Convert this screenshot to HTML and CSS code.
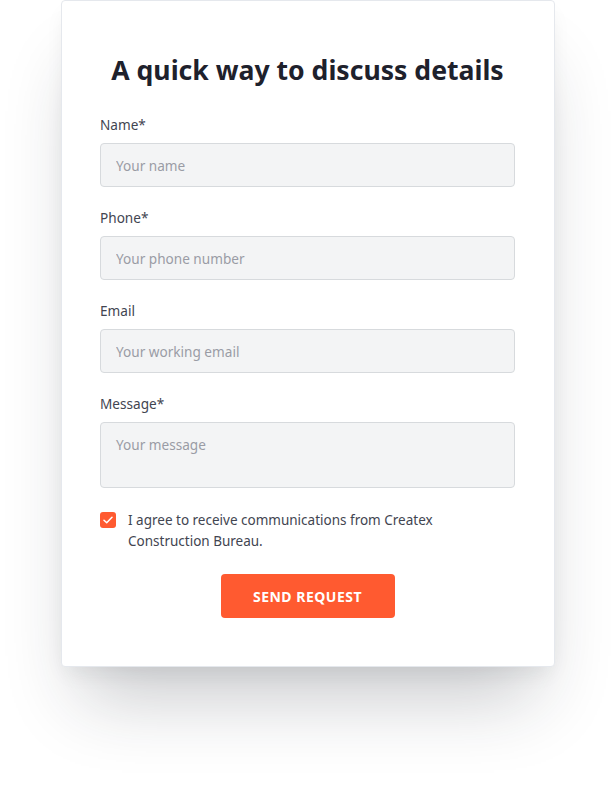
FILE: index.html
```html
<!DOCTYPE html>
<html lang="en">
<head>
<meta charset="utf-8">
<title>Contact form</title>
<link rel="stylesheet" href="styles.css">
</head>
<body>
<div class="page">
  <form class="card">
    <h1 class="title">A quick way to discuss details</h1>
    <div class="field">
      <label class="label" for="name">Name*</label>
      <input class="input" id="name" type="text" placeholder="Your name">
    </div>
    <div class="field">
      <label class="label" for="phone">Phone*</label>
      <input class="input" id="phone" type="text" placeholder="Your phone number">
    </div>
    <div class="field">
      <label class="label" for="email">Email</label>
      <input class="input" id="email" type="text" placeholder="Your working email">
    </div>
    <div class="field field-last">
      <label class="label" for="msg">Message*</label>
      <textarea class="input textarea" id="msg" placeholder="Your message"></textarea>
    </div>
    <label class="agree">
      <span class="check">
        <svg width="10" height="8" viewBox="0 0 10 8"><path d="M1 4.2 L3.7 6.8 L9 1.2" fill="none" stroke="#fff" stroke-width="1.5" stroke-linecap="round" stroke-linejoin="round"/></svg>
      </span>
      <span class="agree-text">I agree to receive communications from Createx Construction Bureau.</span>
    </label>
    <div class="actions">
      <button class="btn" type="button">SEND REQUEST</button>
    </div>
  </form>
</div>
</body>
</html>
```

FILE: styles.css
```css
* { box-sizing: border-box; }
html, body { margin: 0; padding: 0; background: #fff; }
body {
  font-family: "Noto Sans", "Open Sans", sans-serif;
  color: #1e212c;
}
.page {
  padding-left: 61px;
  height: 786px;
  overflow: hidden;
}
.card {
  width: 494px;
  background: #fff;
  border: 1px solid #e5e8ed;
  border-radius: 4px;
  padding: 52px 39px 48px 38px;
  box-shadow: 0 50px 70px -20px rgba(30, 33, 44, 0.24), 0 10px 20px -5px rgba(30,33,44,0.08);
}
.title {
  margin: 0 0 28px;
  text-align: center;
  font-size: 26.6px;
  line-height: 34px;
  font-weight: 700;
  color: #1e212c;
}
.field {
  display: flex;
  flex-direction: column;
  margin-bottom: 21px;
}
.field-last { margin-bottom: 22px; }
.label {
  font-size: 13.6px;
  line-height: 20px;
  color: #424551;
  margin-bottom: 8px;
}
.input {
  height: 44px;
  border: 1px solid #d7dadd;
  border-radius: 4px;
  background: #f3f4f5;
  padding: 0 15px;
  font-family: inherit;
  font-size: 13.6px;
  color: #424551;
  outline: none;
}
.input::placeholder { color: #9a9ca5; }
.textarea {
  height: 66px;
  padding-top: 12px;
  resize: none;
  line-height: 20px;
}
.agree {
  display: flex;
  align-items: flex-start;
  gap: 12px;
}
.check {
  flex: none;
  width: 16px;
  height: 16px;
  margin-top: 2px;
  border-radius: 3px;
  background: #ff5a30;
  display: flex;
  align-items: center;
  justify-content: center;
}
.agree-text {
  font-size: 13.5px;
  line-height: 21px;
  color: #424551;
  max-width: 320px;
}
.actions {
  display: flex;
  justify-content: center;
  margin-top: 22px;
}
.btn {
  width: 174px;
  height: 44px;
  border: 0;
  border-radius: 4px;
  background: #ff5a30;
  color: #fff;
  font-family: inherit;
  font-weight: 700;
  font-size: 14px;
  letter-spacing: 0.5px;
}
```
